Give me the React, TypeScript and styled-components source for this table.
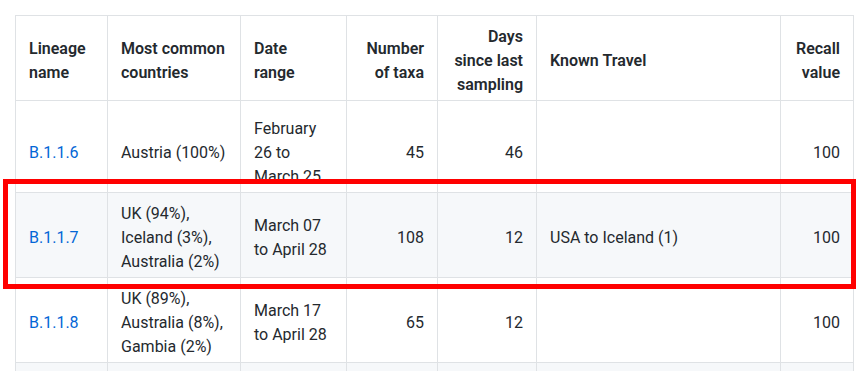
import { FC, Fragment } from 'react';
import styled, { createGlobalStyle } from 'styled-components';

const GlobalStyle = createGlobalStyle`
  html, body {
    margin: 0;
    padding: 0;
    background: #fff;
  }
  body {
    font-family: Roboto, "Noto Sans", sans-serif;
    font-size: 16px;
    line-height: 1.5;
    color: #24292e;
  }
`;

const Page = styled.div`
  position: relative;
  padding: 15px 0 0 15px;
  height: 371px;
  overflow: hidden;
`;

const Table = styled.table`
  border-collapse: collapse;
  border-spacing: 0;
  table-layout: fixed;
  width: 838px;
`;

const Head = styled.th<{ $align?: 'left' | 'right' }>`
  padding: 9px 13px 3px;
  border: 1px solid #dfe2e5;
  font-weight: 600;
  text-align: ${(p) => p.$align ?? 'left'};
  vertical-align: middle;
`;

const Row = styled.tr<{ $striped?: boolean; $first?: boolean }>`
  height: 85px;
  background: ${(p) => (p.$striped ? '#f6f8fa' : '#fff')};

  td {
    padding: ${(p) => (p.$first ? '16px 13px 3px' : '9px 13px 3px')};
  }
`;

const Cell = styled.td<{ $align?: 'left' | 'right' }>`
  border: 1px solid #dfe2e5;
  text-align: ${(p) => p.$align ?? 'left'};
  vertical-align: middle;
`;

const LineageLink = styled.a`
  color: #0366d6;
  text-decoration: none;
`;

const Highlight = styled.div`
  position: absolute;
  left: 3px;
  top: 179px;
  width: 853px;
  height: 110px;
  box-sizing: border-box;
  border: 5px solid #ff0000;
  pointer-events: none;
`;

interface Column {
  lines: string[];
  width: number;
  align: 'left' | 'right';
}

const columns: Column[] = [
  { lines: ['Lineage', 'name'], width: 92, align: 'left' },
  { lines: ['Most common', 'countries'], width: 133, align: 'left' },
  { lines: ['Date', 'range'], width: 106, align: 'left' },
  { lines: ['Number', 'of taxa'], width: 91, align: 'right' },
  { lines: ['Days', 'since last', 'sampling'], width: 99, align: 'right' },
  { lines: ['Known Travel'], width: 244, align: 'left' },
  { lines: ['Recall', 'value'], width: 73, align: 'right' },
];

interface Lineage {
  name: string;
  countries: string;
  dates: string;
  taxa: number;
  days: number;
  travel: string;
  recall: number;
}

const lineages: Lineage[] = [
  {
    name: 'B.1.1.6',
    countries: 'Austria (100%)',
    dates: 'February 26 to March 25',
    taxa: 45,
    days: 46,
    travel: '',
    recall: 100,
  },
  {
    name: 'B.1.1.7',
    countries: 'UK (94%), Iceland (3%), Australia (2%)',
    dates: 'March 07 to April 28',
    taxa: 108,
    days: 12,
    travel: 'USA to Iceland (1)',
    recall: 100,
  },
  {
    name: 'B.1.1.8',
    countries: 'UK (89%), Australia (8%), Gambia (2%)',
    dates: 'March 17 to April 28',
    taxa: 65,
    days: 12,
    travel: '',
    recall: 100,
  },
];

const App: FC = () => {
  return (
    <Page>
      <GlobalStyle />
      <Table>
        <colgroup>
          {columns.map((c) => (
            <col key={c.lines.join(' ')} style={{ width: c.width }} />
          ))}
        </colgroup>
        <thead>
          <tr>
            {columns.map((c) => (
              <Head key={c.lines.join(' ')} $align={c.align}>
                {c.lines.map((line, i) => (
                  <Fragment key={line}>
                    {i > 0 && <br />}
                    {line}
                  </Fragment>
                ))}
              </Head>
            ))}
          </tr>
        </thead>
        <tbody>
          {lineages.map((l, i) => (
            <Row key={l.name} $striped={i % 2 === 1} $first={i === 0}>
              <Cell>
                <LineageLink href="#">{l.name}</LineageLink>
              </Cell>
              <Cell>{l.countries}</Cell>
              <Cell>{l.dates}</Cell>
              <Cell $align="right">{l.taxa}</Cell>
              <Cell $align="right">{l.days}</Cell>
              <Cell>{l.travel}</Cell>
              <Cell $align="right">{l.recall}</Cell>
            </Row>
          ))}
          {/* next row starts just above the fold */}
          <Row $striped>
            {columns.map((c) => (
              <Cell key={c.lines.join(' ')} />
            ))}
          </Row>
        </tbody>
      </Table>
      <Highlight />
    </Page>
  );
};

export default App;
